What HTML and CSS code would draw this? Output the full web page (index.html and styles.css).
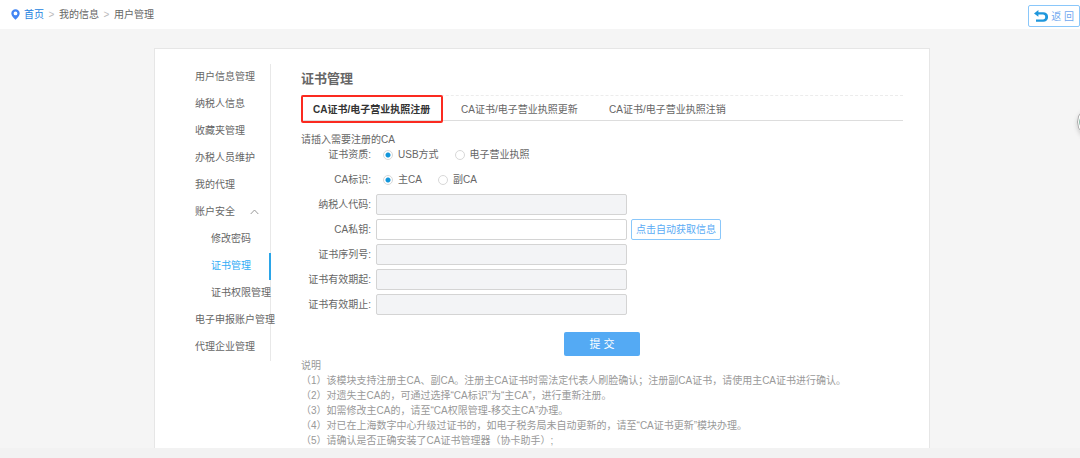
FILE: index.html
```html
<!DOCTYPE html>
<html lang="zh-CN">
<head>
<meta charset="utf-8">
<title>证书管理</title>
<link rel="stylesheet" href="styles.css">
</head>
<body>
<header class="topbar">
  <nav class="crumbs" aria-label="面包屑">
    <svg class="pin" viewBox="0 0 9 11" aria-hidden="true"><path fill="#4285f4" fill-rule="evenodd" d="M4.500 .2A4.200 4.200 0 0 0 .3 4.400C.3 7 3 9 4.500 10.800 6 9 8.700 7 8.700 4.400A4.200 4.200 0 0 0 4.500 .2ZM4.500 2.500a1.900 1.900 0 1 1 0 3.800 1.900 1.900 0 0 1 0-3.800Z"/></svg>
    <a class="home" href="#">首页</a>
    <span class="sep">&gt;</span>
    <a href="#">我的信息</a>
    <span class="sep">&gt;</span>
    <span>用户管理</span>
  </nav>
  <button class="back" type="button">
    <svg class="back-icon" viewBox="0 0 14 12" aria-hidden="true"><path fill="#1f97dc" d="M0 3.400 4.400 0V2.200H9.300A4.800 4.800 0 0 1 9.300 11.800H2V9.600H9.200A2.600 2.600 0 0 0 9.200 4.500H4.400V6.800Z"/></svg>
    返 回
  </button>
</header>
<main class="card">
  <ul class="side">
    <li><a href="#">用户信息管理</a></li>
    <li><a href="#">纳税人信息</a></li>
    <li><a href="#">收藏夹管理</a></li>
    <li><a href="#">办税人员维护</a></li>
    <li><a href="#">我的代理</a></li>
    <li><a href="#">账户安全<svg class="caret" viewBox="0 0 9 6" aria-hidden="true"><path d="M.7 5 4.500 1 8.300 5" fill="none" stroke="#999"/></svg></a></li>
    <li class="sub"><a href="#">修改密码</a></li>
    <li class="sub current"><a href="#" aria-current="page">证书管理</a></li>
    <li class="sub"><a href="#">证书权限管理</a></li>
    <li><a href="#">电子申报账户管理</a></li>
    <li><a href="#">代理企业管理</a></li>
  </ul>
  <section class="content">
    <h1 class="title">证书管理</h1>
    <nav class="tabs">
      <a class="tab active" href="#">CA证书/电子营业执照注册</a>
      <a class="tab" href="#">CA证书/电子营业执照更新</a>
      <a class="tab" href="#">CA证书/电子营业执照注销</a>
    </nav>
    <form class="form">
      <p class="hint">请插入需要注册的CA</p>
      <div class="row" role="radiogroup" aria-labelledby="kind">
        <span class="label" id="kind">证书资质:</span>
        <div class="options">
          <label class="option"><input type="radio" name="kind" checked>USB方式</label>
          <label class="option"><input type="radio" name="kind">电子营业执照</label>
        </div>
      </div>
      <div class="row" role="radiogroup" aria-labelledby="mark">
        <span class="label" id="mark">CA标识:</span>
        <div class="options">
          <label class="option"><input type="radio" name="mark" checked>主CA</label>
          <label class="option"><input type="radio" name="mark">副CA</label>
        </div>
      </div>
      <div class="row"><label class="label" for="code">纳税人代码:</label><input class="field" id="code" type="text" disabled></div>
      <div class="row"><label class="label" for="key">CA私钥:</label><input class="field" id="key" type="password"><button class="fetch" type="button">点击自动获取信息</button></div>
      <div class="row"><label class="label" for="serial">证书序列号:</label><input class="field" id="serial" type="text" disabled></div>
      <div class="row"><label class="label" for="from">证书有效期起:</label><input class="field" id="from" type="text" disabled></div>
      <div class="row"><label class="label" for="to">证书有效期止:</label><input class="field" id="to" type="text" disabled></div>
      <button class="submit" type="submit">提 交</button>
    </form>
    <div class="notes">
      <p>说明</p>
      <p>（1）该模块支持注册主CA、副CA。注册主CA证书时需法定代表人刷脸确认；注册副CA证书，请使用主CA证书进行确认。</p>
      <p>（2）对遗失主CA的，可通过选择“CA标识”为“主CA”，进行重新注册。</p>
      <p>（3）如需修改主CA的，请至“CA权限管理-移交主CA”办理。</p>
      <p>（4）对已在上海数字中心升级过证书的，如电子税务局未自动更新的，请至“CA证书更新”模块办理。</p>
      <p>（5）请确认是否正确安装了CA证书管理器（协卡助手）;</p>
    </div>
  </section>
</main>
<footer class="foot"></footer>
<button class="floating" type="button" aria-label="客服"></button>
</body>
</html>
```
FILE: styles.css
```css
* { box-sizing: border-box; }
body, h1, p, ul { margin: 0; padding: 0; }
body {
  position: relative;
  min-height: 100vh;
  display: flex;
  flex-direction: column;
  overflow-x: hidden;
  background: #f5f5f5;
  color: #666;
  font: 10px/15px "Liberation Sans", "Noto Sans CJK SC", sans-serif;
}
a { color: inherit; text-decoration: none; }
button, input { font: inherit; }
button { cursor: pointer; padding: 0; }

.topbar {
  display: flex;
  justify-content: space-between;
  align-items: center;
  height: 29px;
  padding-left: 11px;
  background: #fff;
}
.crumbs { display: flex; align-items: center; }
.pin { width: 9px; height: 11px; margin-right: 4px; }
.home { color: #1c7fe0; }
.sep { width: 15px; text-align: center; color: #bbb; }
.back {
  display: flex;
  align-items: center;
  gap: 3px;
  height: 22px;
  margin-top: 3px;
  padding: 0 5px;
  border: 1px solid #8ac7fa;
  border-radius: 2px;
  background: #fff;
  color: #6fa8f0;
}
.back-icon { width: 14px; height: 12px; }

.card {
  display: flex;
  align-items: flex-start;
  gap: 30px;
  margin: 19px 150px 0 154px;
  padding: 15px 26px 0 40px;
  border: 1px solid #e6e6e6;
  border-bottom: 0;
  background: #fff;
}
.side {
  flex: none;
  width: 76px;
  border-right: 1px solid #e8e8e8;
  list-style: none;
  white-space: nowrap;
}
.side li { height: 27px; line-height: 25px; }
.side .sub { padding-left: 16px; }
.side .current {
  margin-right: -1px;
  border-right: 2px solid #2ba5e8;
  color: #2fabf5;
}
.caret { width: 9px; height: 6px; margin-left: 15px; }

.content { flex: 1; min-width: 0; }
.title {
  height: 31px;
  line-height: 30px;
  color: #666;
  font-size: 13px;
  font-weight: bold;
}
.tabs {
  display: flex;
  height: 26px;
  border-top: 1px dashed #ececec;
  border-bottom: 1px solid #ddd;
}
.tab {
  position: relative;
  width: 148px;
  padding-left: 12px;
  line-height: 27px;
  white-space: nowrap;
}
.active { color: #333; font-weight: bold; }
.active::after {
  content: "";
  position: absolute;
  inset: -1px 6px -3px 0;
  border: 2px solid #fb2a20;
  border-radius: 2px;
}

.form { display: flex; flex-direction: column; padding-top: 11px; }
.hint { height: 10px; line-height: 15px; }
.row { display: flex; align-items: center; height: 25px; }
.label { width: 70px; margin-right: 5px; text-align: right; white-space: nowrap; }
.options { display: flex; gap: 16px; padding-left: 7px; }
.option { display: flex; align-items: center; gap: 5px; }
.option input {
  appearance: none;
  width: 10px;
  height: 10px;
  margin: 0;
  border: 1px solid #d8d8d8;
  border-radius: 50%;
}
.option input:checked { background: radial-gradient(circle, #1296db 2px, #fff 3px); }
.field {
  width: 251px;
  height: 21px;
  border: 1px solid #d4d4d4;
  border-radius: 2px;
  background: #fff;
}
.field:disabled { background: #f3f4f6; }
.fetch {
  height: 21px;
  margin-left: 4px;
  padding: 0 4px;
  border: 1px solid #8ac7fa;
  border-radius: 2px;
  background: #fff;
  color: #5aabf5;
}
.submit {
  align-self: center;
  width: 76px;
  height: 24px;
  margin-top: 15px;
  border: 0;
  border-radius: 2px;
  background: #54aaf4;
  color: #fff;
  font-size: 11px;
}
.notes { margin-top: 2px; color: #999; }
.foot { flex: 1; background: #f2f2f2; }

.floating {
  position: absolute;
  top: 106px;
  right: -29px;
  width: 32px;
  height: 32px;
  border: 1px solid #aaa;
  border-radius: 50%;
  background: radial-gradient(circle, #2f8263 13px, #fff 14px);
  box-shadow: 0 2px 4px #ccc;
}
```
